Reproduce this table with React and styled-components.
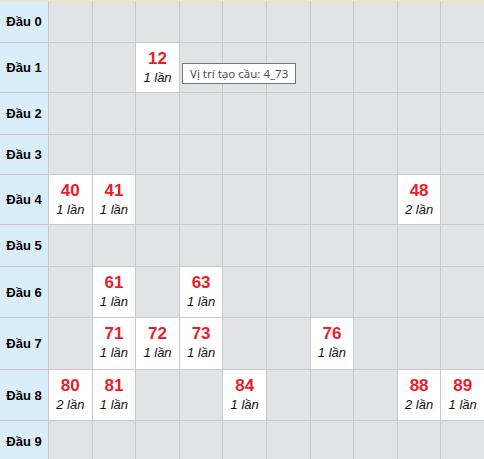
import React from 'react';
import styled, { createGlobalStyle } from 'styled-components';

const GlobalStyle = createGlobalStyle`
  html, body {
    margin: 0;
    padding: 0;
    overflow: hidden;
    background: #e2e3e5;
  }
  body {
    font-family: "Liberation Sans", Arial, sans-serif;
  }
`;

const Board = styled.div`
  position: relative;
  width: 484px;
  display: flex;
  flex-direction: column;
  gap: 1px;
  background: #c9c9cb;
  border-top: 1px solid #fce6a2;
`;

const Row = styled.div`
  display: grid;
  grid-template-columns: 48px repeat(10, 1fr);
  column-gap: 1px;
  min-height: ${(p) => p.$height}px;
`;

const Label = styled.div`
  background: #d9eef9;
  display: flex;
  align-items: center;
  justify-content: center;
  font-size: 13px;
  font-weight: bold;
  color: #000;
`;

const Cell = styled.div`
  background: ${(p) => (p.$filled ? '#ffffff' : '#e2e3e5')};
  display: flex;
  flex-direction: column;
  align-items: center;
  padding: ${(p) => (p.$filled ? '6px 0 5px' : '0')};
`;

const Number = styled.div`
  font-size: 17px;
  line-height: 20px;
  font-weight: bold;
  color: #ea1d2c;
`;

const Times = styled.div`
  font-size: 13px;
  line-height: 18px;
  font-style: italic;
  color: #111;
  white-space: nowrap;
`;

const Tooltip = styled.div`
  position: absolute;
  left: 182px;
  top: 62px;
  height: 19px;
  padding: 0 7px;
  display: flex;
  align-items: center;
  background: #ffffff;
  border: 1px solid #767676;
  font-family: "Noto Sans", "Liberation Sans", sans-serif;
  font-size: 11.5px;
  color: #505050;
  white-space: nowrap;
`;

const rowHeights = [41, 49, 41, 39, 49, 41, 50, 51, 50, 41];

const hits = {
  1: { 2: 1 },
  4: { 0: 1, 1: 1, 8: 2 },
  6: { 1: 1, 3: 1 },
  7: { 1: 1, 2: 1, 3: 1, 6: 1 },
  8: { 0: 2, 1: 1, 4: 1, 8: 2, 9: 1 },
};

const App = () => {
  const cols = Array.from({ length: 10 }, (_, i) => i);

  return (
    <>
      <GlobalStyle />
      <Board>
        {rowHeights.map((height, head) => (
          <Row key={head} $height={height}>
            <Label>Đầu {head}</Label>
            {cols.map((tail) => {
              const count = hits[head] && hits[head][tail];
              return (
                <Cell key={tail} $filled={!!count}>
                  {count && (
                    <>
                      <Number>{`${head}${tail}`}</Number>
                      <Times>{count} lần</Times>
                    </>
                  )}
                </Cell>
              );
            })}
          </Row>
        ))}
        <Tooltip>Vị trí tạo cầu: 4_73</Tooltip>
      </Board>
    </>
  );
};

export default App;
